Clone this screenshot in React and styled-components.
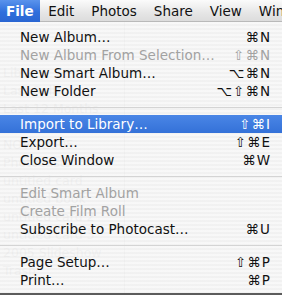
import React from 'react'
import styled, { createGlobalStyle } from 'styled-components'

const Global = createGlobalStyle`
  html, body {
    margin: 0;
    padding: 0;
    background: #e9e9e9;
  }
  body {
    width: 282px;
    height: 295px;
    overflow: hidden;
    font-family: "DejaVu Sans", "Liberation Sans", sans-serif;
  }
`

const Screen = styled.div`
  position: relative;
  width: 282px;
  height: 295px;
  overflow: hidden;
  background: #ececec;
`

const MenuBar = styled.div`
  display: flex;
  align-items: center;
  height: 22px;
  background: linear-gradient(#fbfbfb, #e6e6e6 60%, #dcdcdc);
  border-bottom: 1px solid #b9b9b9;
  box-sizing: border-box;
`

const BarItem = styled.div`
  height: 22px;
  line-height: 22px;
  padding: 0 ${p => (p.$open ? '6px' : '8.5px')};
  font-size: 13.5px;
  font-weight: ${p => (p.$open ? 700 : 400)};
  color: ${p => (p.$open ? '#fff' : '#111')};
  background: ${p => (p.$open ? 'linear-gradient(#5a93ec, #2f6fdc 55%, #2a66d2)' : 'none')};
  white-space: nowrap;
`

/* the iPhoto window that shows faintly through the menu */
const Window = styled.div`
  display: flex;
  height: 273px;
  background: repeating-linear-gradient(#f3f3f3 0 2px, #e8e8e8 2px 4px);
`

const SourceList = styled.div`
  width: 124px;
  padding-top: 42px;
  border-right: 1px solid #b0b0b0;
  display: flex;
  flex-direction: column;
`

const Source = styled.div`
  height: 18px;
  line-height: 18px;
  padding-left: 3px;
  font-size: 12.5px;
  color: #8a8a8a;
  white-space: nowrap;
`

const Menu = styled.div`
  position: absolute;
  left: 0;
  top: 22px;
  width: 282px;
  padding: 6px 0 4px;
  box-sizing: border-box;
  background: repeating-linear-gradient(rgba(248, 248, 248, 0.93) 0 2px, rgba(242, 242, 242, 0.93) 2px 4px);
  border-bottom: 2px solid #5c5c5c;
`

const Row = styled.div`
  display: flex;
  align-items: center;
  justify-content: space-between;
  height: 18px;
  padding: 0 11px 0 20px;
  font-size: 13.5px;
  color: ${p => (p.$off ? '#a2a2a2' : p.$hot ? '#fff' : '#111')};
  background: ${p => (p.$hot ? 'linear-gradient(#4a86e6, #3471d8)' : 'transparent')};
  white-space: nowrap;
`

const Keys = styled.span`
  letter-spacing: 1px;
`

const Separator = styled.div`
  height: 15px;
  display: flex;
  align-items: center;

  &::after {
    content: '';
    flex: 1;
    height: 1px;
    background: #d4d4d4;
  }
`

const sources = [
  'Library',
  'Last Roll',
  'Last 12 Months',
  'Photos',
  'NOVA 2005',
  'Photocasts',
  'untitled card',
  'untitled book',
  'untitled card 2',
  'untitled card 3',
  '2005 Slideshow',
  'Trash',
]

const groups = [
  [
    ['New Album…', '⌘N'],
    ['New Album From Selection…', '⇧⌘N', 'off'],
    ['New Smart Album…', '⌥⌘N'],
    ['New Folder', '⌥⇧⌘N'],
  ],
  [
    ['Import to Library…', '⇧⌘I', 'hot'],
    ['Export…', '⇧⌘E'],
    ['Close Window', '⌘W'],
  ],
  [
    ['Edit Smart Album', '', 'off'],
    ['Create Film Roll', '', 'off'],
    ['Subscribe to Photocast…', '⌘U'],
  ],
  [
    ['Page Setup…', '⇧⌘P'],
    ['Print…', '⌘P'],
  ],
]

export default function App() {
  return (
    <Screen>
      <Global />
      <MenuBar>
        <BarItem $open>File</BarItem>
        <BarItem>Edit</BarItem>
        <BarItem>Photos</BarItem>
        <BarItem>Share</BarItem>
        <BarItem>View</BarItem>
        <BarItem>Window</BarItem>
      </MenuBar>
      <Window>
        <SourceList>
          {sources.map(s => (
            <Source key={s}>{s}</Source>
          ))}
        </SourceList>
      </Window>
      <Menu>
        {groups.map((g, i) => (
          <React.Fragment key={i}>
            {i > 0 && <Separator />}
            {g.map(([label, keys, state]) => (
              <Row key={label} $off={state === 'off'} $hot={state === 'hot'}>
                <span>{label}</span>
                <Keys>{keys}</Keys>
              </Row>
            ))}
          </React.Fragment>
        ))}
      </Menu>
    </Screen>
  )
}
